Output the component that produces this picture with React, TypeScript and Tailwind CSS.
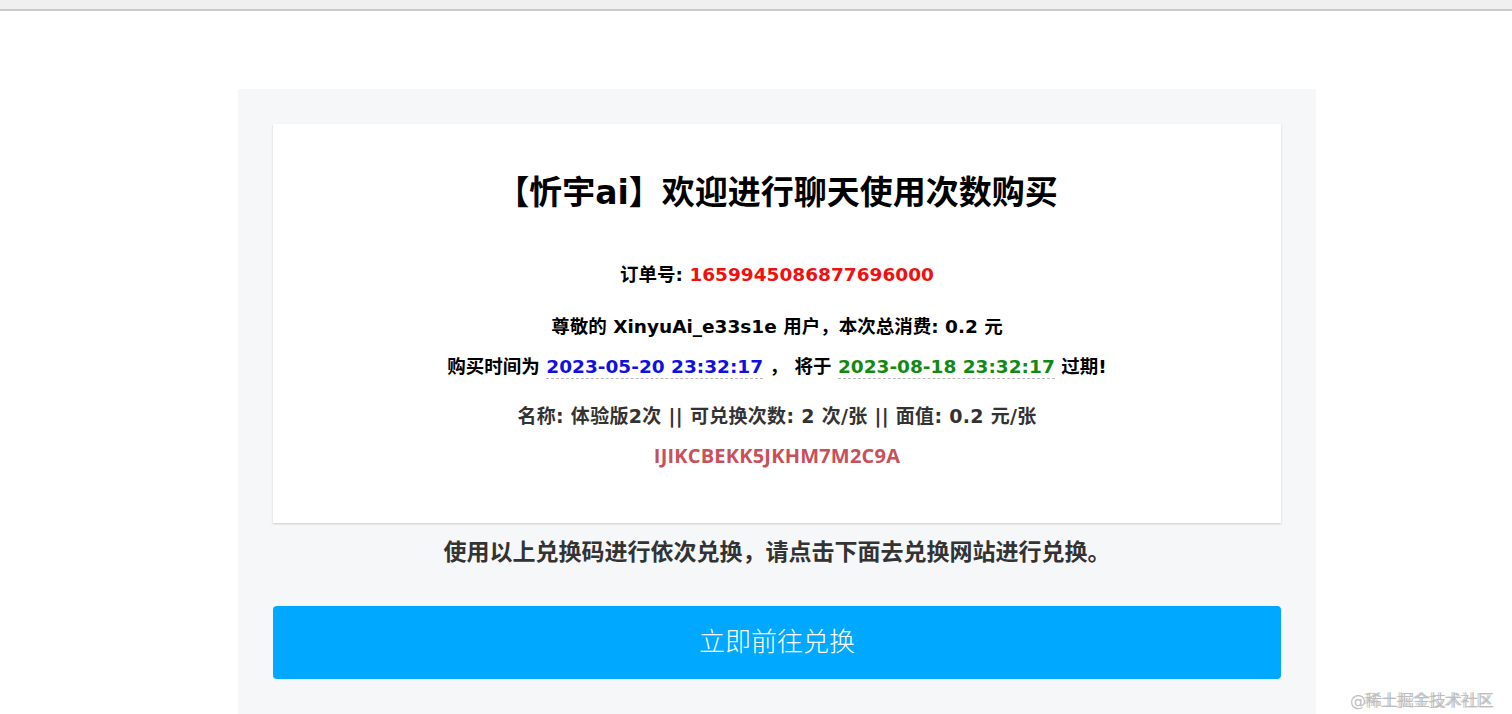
const FONT = '"DejaVu Sans", "Noto Sans CJK SC", sans-serif';

function DateText({ value, color }: { value: string; color: string }) {
  return (
    <span className={`${color} border-b border-dashed border-[#b8b8b8] pb-[1px]`}>{value}</span>
  );
}

export default function App() {
  return (
    <div className="relative min-h-[714px] bg-white overflow-hidden" style={{ fontFamily: FONT }}>
      {/* 浏览器顶栏 */}
      <div className="h-[11px] bg-[#f0f0f0] border-b-2 border-[#c9c9c9]" />

      <div className="ml-[238px] mt-[78px] w-[1078px] min-h-[640px] bg-[#f6f7f9] px-[35px] pt-[35px]">
        {/* 订单卡片 */}
        <div className="bg-white shadow-[0_1px_2px_rgba(0,0,0,0.18)] pt-[48px] pb-[53px] text-center">
          <h1 className="text-[33px] leading-[42px] font-bold text-black">【忻宇ai】欢迎进行聊天使用次数购买</h1>

          <p className="mt-[47px] text-[18.5px] leading-[28px] font-bold text-black">
            订单号: <span className="text-[#f01010]">1659945086877696000</span>
          </p>

          <p className="mt-[24px] text-[18.5px] leading-[28px] font-bold text-black">
            尊敬的 XinyuAi_e33s1e 用户，本次总消费: 0.2 元
          </p>

          <p className="mt-[12px] text-[18.5px] leading-[28px] font-bold text-black">
            购买时间为 <DateText value="2023-05-20 23:32:17" color="text-[#1010e0]" /> ，&nbsp;将于{' '}
            <DateText value="2023-08-18 23:32:17" color="text-[#108a10]" /> 过期!
          </p>

          <p className="mt-[21px] text-[19px] leading-[28px] font-semibold text-[#333] tracking-[0.3px]">
            名称: 体验版2次 || 可兑换次数: 2 次/张 || 面值: 0.2 元/张
          </p>

          <p
            className="mt-[12px] text-[20px] leading-[28px] font-bold text-[#c8505a] tracking-[0.2px]"
            style={{ fontFamily: '"Open Sans", sans-serif' }}
          >
            IJIKCBEKK5JKHM7M2C9A
          </p>
        </div>

        <p className="mt-[14px] text-center text-[23px] leading-[30px] font-bold text-[#333]">
          使用以上兑换码进行依次兑换，请点击下面去兑换网站进行兑换。
        </p>

        <button className="mt-[39px] w-full h-[73px] rounded-[4px] bg-[#00a8ff] text-white text-[26px] font-light">
          立即前往兑换
        </button>
      </div>

      {/* 水印 */}
      <div className="absolute right-[18px] bottom-[18px] text-[16px] leading-[20px] text-[#bdbdbd]">
        <span>@稀土掘金技术社区</span>
        <span className="absolute left-[14px] top-0 opacity-70">稀土掘金技术社区</span>
      </div>
    </div>
  );
}
